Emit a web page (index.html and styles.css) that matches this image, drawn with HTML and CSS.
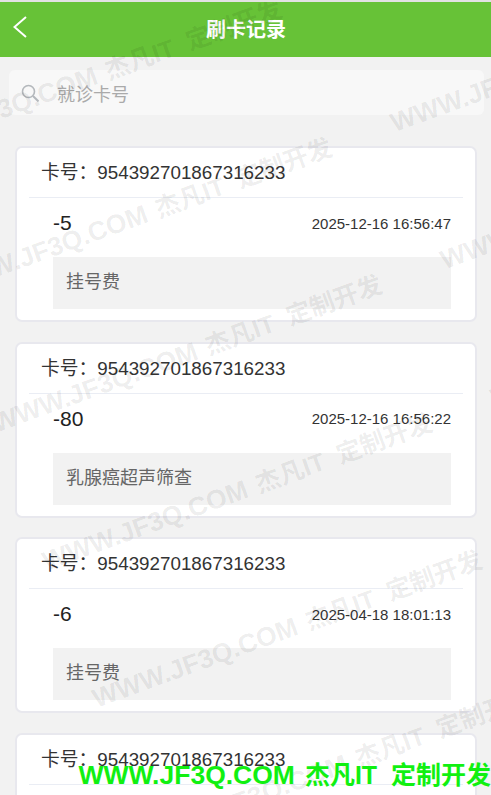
FILE: index.html
```html
<!DOCTYPE html>
<html lang="zh-CN">
  <head>
    <meta charset="utf-8" />
    <title>刷卡记录</title>
    <link rel="stylesheet" href="styles.css">
  </head>
  <body>
    <div class="page">
      <header class="topbar">
        <svg class="back" width="14" height="22" viewBox="0 0 14 22">
          <path d="M13 1 L1.5 11 L13 21" fill="none" stroke="#fff" stroke-width="2"/>
        </svg>
        <h1>刷卡记录</h1>
      </header>

      <div class="search">
        <svg class="search-icon" width="18" height="18" viewBox="0 0 18 18">
          <circle cx="7.5" cy="7.5" r="6" fill="none" stroke="#b4b8bc" stroke-width="1.6"/>
          <path d="M12 12 L17.5 17.5" fill="none" stroke="#b4b8bc" stroke-width="2"/>
        </svg>
        <span>就诊卡号</span>
      </div>

      <div class="list">
        <div class="card">
          <div class="card-no">卡号：954392701867316233</div>
          <div class="card-row">
            <span class="amount">-5</span>
            <span class="time">2025-12-16 16:56:47</span>
          </div>
          <div class="item">挂号费</div>
        </div>
        <div class="card">
          <div class="card-no">卡号：954392701867316233</div>
          <div class="card-row">
            <span class="amount">-80</span>
            <span class="time">2025-12-16 16:56:22</span>
          </div>
          <div class="item">乳腺癌超声筛查</div>
        </div>
        <div class="card">
          <div class="card-no">卡号：954392701867316233</div>
          <div class="card-row">
            <span class="amount">-6</span>
            <span class="time">2025-04-18 18:01:13</span>
          </div>
          <div class="item">挂号费</div>
        </div>
        <div class="card">
          <div class="card-no">卡号：954392701867316233</div>
          <div class="card-row">
            <span class="amount">-6</span>
            <span class="time">2025-04-18 18:00:41</span>
          </div>
          <div class="item">挂号费</div>
        </div>
      </div>

      <!-- repeated watermark, laid over everything -->
      <div class="marks">
        <div class="mark"><span class="url">WWW.JF3Q.COM</span> 杰凡IT&nbsp; 定制开发</div>
        <div class="mark"><span class="url">WWW.JF3Q.COM</span> 杰凡IT&nbsp; 定制开发</div>
        <div class="mark"><span class="url">WWW.JF3Q.COM</span> 杰凡IT&nbsp; 定制开发</div>
        <div class="mark"><span class="url">WWW.JF3Q.COM</span> 杰凡IT&nbsp; 定制开发</div>
        <div class="mark"><span class="url">WWW.JF3Q.COM</span> 杰凡IT&nbsp; 定制开发</div>
        <div class="mark"><span class="url">WWW.JF3Q.COM</span> 杰凡IT&nbsp; 定制开发</div>
        <div class="mark"><span class="url">WWW.JF3Q.COM</span> 杰凡IT&nbsp; 定制开发</div>
        <div class="mark"><span class="url">WWW.JF3Q.COM</span> 杰凡IT&nbsp; 定制开发</div>
        <div class="mark"><span class="url">WWW.JF3Q.COM</span> 杰凡IT&nbsp; 定制开发</div>
        <div class="mark"></div>
        <div class="mark"><span class="url">WWW.JF3Q.COM</span> 杰凡IT&nbsp; 定制开发</div>
        <div class="mark"><span class="url">WWW.JF3Q.COM</span> 杰凡IT&nbsp; 定制开发</div>
        <div class="mark"></div>
        <div class="mark"><span class="url">WWW.JF3Q.COM</span> 杰凡IT&nbsp; 定制开发</div>
        <div class="mark"><span class="url">WWW.JF3Q.COM</span> 杰凡IT&nbsp; 定制开发</div>
        <div class="mark"></div>
        <div class="mark"><span class="url">WWW.JF3Q.COM</span> 杰凡IT&nbsp; 定制开发</div>
        <div class="mark"><span class="url">WWW.JF3Q.COM</span> 杰凡IT&nbsp; 定制开发</div>
        <div class="mark"></div>
        <div class="mark"><span class="url">WWW.JF3Q.COM</span> 杰凡IT&nbsp; 定制开发</div>
        <div class="mark"><span class="url">WWW.JF3Q.COM</span> 杰凡IT&nbsp; 定制开发</div>
        <div class="mark"></div>
        <div class="mark"><span class="url">WWW.JF3Q.COM</span> 杰凡IT&nbsp; 定制开发</div>
        <div class="mark"><span class="url">WWW.JF3Q.COM</span> 杰凡IT&nbsp; 定制开发</div>
      </div>

      <div class="brand"><span class="url">WWW.JF3Q.COM</span> 杰凡IT&nbsp; 定制开发</div>
    </div>
  </body>
</html>
```

FILE: styles.css
```css
html, body {
  margin: 0;
  height: 100%;
}
body {
  font-family: "Liberation Sans", "Noto Sans CJK SC", sans-serif;
  background: #f2f2f2;
}
.page {
  position: relative;
  width: 491px;
  height: 795px;
  overflow: hidden;
  background: #f2f2f2;
  border-top: 2px solid #e2e2e2;
  box-sizing: border-box;
}
/* Header */
.topbar {
  display: flex;
  align-items: center;
  justify-content: center;
  position: relative;
  height: 55px;
  padding: 0 0 3px 1px;
  box-sizing: border-box;
  background: #67c237;
}
.topbar h1 {
  margin: 0;
  font-size: 20px;
  font-weight: bold;
  color: #fff;
}
.back {
  position: absolute;
  left: 13px;
  top: 14px;
}
/* Search */
.search {
  display: flex;
  align-items: center;
  gap: 18px;
  height: 45px;
  margin: 13px 7px 0 9px;
  padding-left: 12px;
  background: #f8f8f8;
  border-radius: 6px;
  font-size: 18px;
  color: #aaa;
}
/* Record cards */
.list {
  display: flex;
  flex-direction: column;
  gap: 19.6px;
  margin: 31px 14px 0 15px;
}
.card {
  flex: none;
  box-sizing: border-box;
  height: 176px;
  padding: 0 12px 0 12px;
  background: #fff;
  border: 2px solid #e8e8ee;
  border-radius: 7px;
}
.card-no {
  height: 49px;
  line-height: 49px;
  padding-left: 12px;
  border-bottom: 1px solid #eaedf4;
  font-size: 18.8px;
  color: #333;
}
.card-row {
  display: flex;
  align-items: center;
  justify-content: space-between;
  height: 57px;
  padding: 0 12px 7px 24px;
  box-sizing: border-box;
}
.amount {
  font-size: 21px;
  color: #222;
}
.time {
  font-size: 15px;
  color: #333;
}
.item {
  height: 52px;
  line-height: 50px;
  margin: 2px 12px 0 24px;
  padding-left: 13px;
  background: #f2f2f2;
  font-size: 18px;
  color: #666;
}
/* Watermark */
.marks {
  position: absolute;
  left: -612px;
  top: 153.5px;
  width: 1431px;
  display: flex;
  flex-wrap: wrap;
  transform: rotate(-20deg);
  transform-origin: 0 0;
  pointer-events: none;
}
.mark {
  flex: none;
  width: 477px;
  height: 146.4px;
  font-size: 25px;
  font-weight: bold;
  white-space: nowrap;
  color: rgba(0, 0, 0, 0.08);
}
.url {
  margin-right: 3px;
  font-size: 26.5px;
}
.brand {
  position: absolute;
  right: 0;
  bottom: 5px;
  font-size: 25px;
  font-weight: bold;
  line-height: 30px;
  white-space: nowrap;
  color: #11f011;
}
```
